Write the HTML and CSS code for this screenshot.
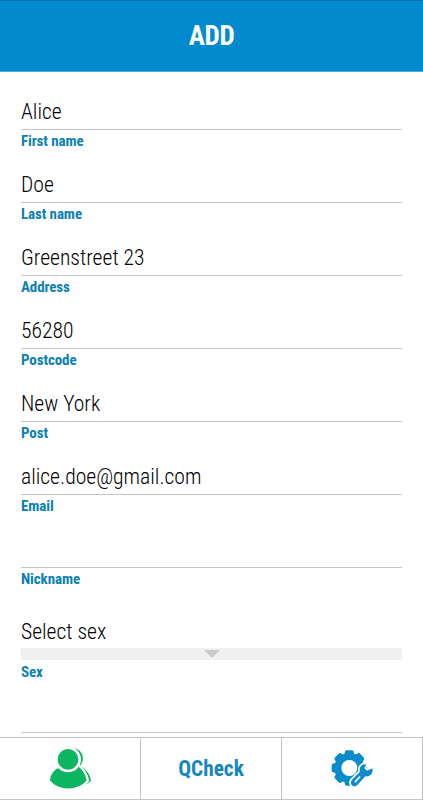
FILE: index.html
```html
<!DOCTYPE html>
<html lang="en">
<head>
    <meta charset="UTF-8">
    <meta name="viewport" content="width=device-width, initial-scale=1.0">
    <title>Add</title>
    <link rel="stylesheet" href="styles.css">
</head>
<body>

    <header class="header">
        <h1 class="title">ADD</h1>
    </header>

    <form class="form">
        <div class="field">
            <input type="text" id="firstName" class="input" value="Alice">
            <label for="firstName" class="label">First name</label>
        </div>
        <div class="field">
            <input type="text" id="lastName" class="input" value="Doe">
            <label for="lastName" class="label">Last name</label>
        </div>
        <div class="field">
            <input type="text" id="address" class="input" value="Greenstreet 23">
            <label for="address" class="label">Address</label>
        </div>
        <div class="field">
            <input type="text" id="postcode" class="input" value="56280">
            <label for="postcode" class="label">Postcode</label>
        </div>
        <div class="field">
            <input type="text" id="post" class="input" value="New York">
            <label for="post" class="label">Post</label>
        </div>
        <div class="field">
            <input type="text" id="email" class="input" value="alice.doe@gmail.com">
            <label for="email" class="label">Email</label>
        </div>
        <div class="field">
            <input type="text" id="nickname" class="input">
            <label for="nickname" class="label">Nickname</label>
        </div>

        <div class="field select-field">
            <div class="select-value">Select sex</div>
            <div class="select-bar">
                <span class="arrow"></span>
            </div>
            <span class="label">Sex</span>
        </div>

        <div class="field">
            <input type="text" class="input">
        </div>
    </form>

    <nav class="tabs">
        <a class="tab" aria-label="Contacts">
            <svg class="icon" viewBox="0 3 180 165">
                <!-- back person -->
                <circle cx="98" cy="55" r="31" fill="#0cb560"/>
                <path d="M118 76C136 84 150 102 153 122Q147 129 138 133L110 90Z" fill="#0cb560"/>
                <!-- front person -->
                <path d="M50 82C36 92 27 106 26 122Q49 149 85 149Q121 149 144 122C140 103 132 88 117 77Z" fill="#0cb560" stroke="#fff" stroke-width="7"/>
                <circle cx="84" cy="58" r="35" fill="#0cb560" stroke="#fff" stroke-width="8"/>
            </svg>
        </a>
        <a class="tab">QCheck</a>
        <a class="tab" aria-label="Settings">
            <svg class="icon" viewBox="3 -2 180 165">
                <g fill="#0a8bcb">
                    <circle cx="85" cy="79" r="45"/>
                    <rect x="71" y="26" width="28" height="106" rx="7"/>
                    <rect x="71" y="26" width="28" height="106" rx="7" transform="rotate(45 85 79)"/>
                    <rect x="71" y="26" width="28" height="106" rx="7" transform="rotate(90 85 79)"/>
                    <rect x="71" y="26" width="28" height="106" rx="7" transform="rotate(135 85 79)"/>
                </g>
                <circle cx="85" cy="79" r="24" fill="#fff"/>
                <!-- wrench -->
                <path d="M93 114L117 90C113 77 122 66 136 68L130 79L138 87L154 80C158 95 147 106 133 104L109 130C96 140 84 127 93 114Z" fill="#0a8bcb" stroke="#fff" stroke-width="10" stroke-linejoin="round" paint-order="stroke"/>
                <path d="M103 120L116 106" stroke="#fff" stroke-width="5" stroke-linecap="round"/>
            </svg>
        </a>
    </nav>

</body>
</html>
```
FILE: styles.css
```css
* {
    box-sizing: border-box;
}

body {
    font-family: "Roboto Condensed", Roboto, sans-serif;
    font-stretch: 75%;
    display: flex;
    flex-direction: column;
    height: 100vh;
    margin: 0;
    background-color: #fff;
    overflow: hidden;
}

.header {
    display: flex;
    justify-content: center;
    align-items: center;
    flex: none;
    height: 72px;
    background-color: #018bce;
    border-top: 1px solid #0a70ac;
    border-bottom: 1px solid #4dabd8;
}

.title {
    margin: 0;
    font-size: 27px;
    font-weight: 700;
    letter-spacing: -0.3px;
    color: #fff;
}

.form {
    flex: 1;
    min-height: 0;
    padding: 21px 21px 0;
    overflow: hidden;
}

.field {
    display: flex;
    flex-direction: column;
    height: 73px;
}

.input {
    width: 100%;
    height: 37px;
    padding: 0;
    border: none;
    border-bottom: 1px solid #c4c4c4;
    outline: none;
    background-color: transparent;
    font-family: inherit;
    font-stretch: inherit;
    font-size: 21.6px;
    font-weight: 300;
    color: #000;
}

.label {
    margin-top: 2px;
    font-size: 15px;
    line-height: 18px;
    font-weight: 700;
    letter-spacing: -0.1px;
    color: #0c80b4;
}

.select-field {
    height: 92px;
    padding-top: 4px;
}

.select-value {
    height: 40px;
    line-height: 48px;
    font-size: 21.6px;
    font-weight: 300;
}

.select-bar {
    display: flex;
    justify-content: center;
    align-items: center;
    flex: none;
    height: 12px;
    margin-bottom: 1px;
    background-color: #f0f0f0;
}

.arrow {
    border-left: 8px solid transparent;
    border-right: 8px solid transparent;
    border-top: 8px solid #c9c9c9;
}

.tabs {
    display: grid;
    grid-template-columns: repeat(3, 1fr);
    flex: none;
    height: 63px;
    border-top: 1px solid #c4c4c4;
    border-bottom: 1px solid #c4c4c4;
}

.tab {
    display: flex;
    justify-content: center;
    align-items: center;
    border-right: 1px solid #c4c4c4;
    font-size: 21.3px;
    font-weight: 700;
    color: #1787bb;
}

.icon {
    width: 60px;
    height: 55px;
}
```
